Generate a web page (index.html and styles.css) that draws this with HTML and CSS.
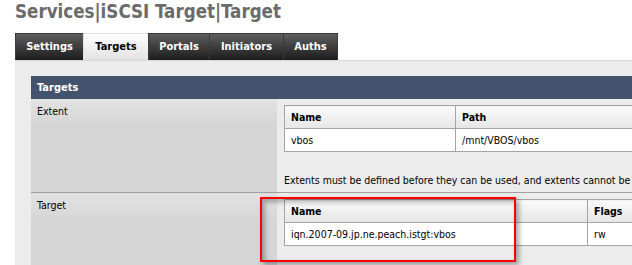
FILE: index.html
```html
<!DOCTYPE html>
<html lang="en">
<head>
  <meta charset="UTF-8">
  <title>Services | iSCSI Target | Target</title>
  <link rel="stylesheet" href="styles.css">
</head>
<body>
  <h1 class="page-title">Services|iSCSI Target|Target</h1>

  <ul class="tabs">
    <li class="tab-settings">Settings</li>
    <li class="tab-targets active">Targets</li>
    <li class="tab-portals">Portals</li>
    <li class="tab-initiators">Initiators</li>
    <li class="tab-auths">Auths</li>
  </ul>

  <div class="tab-panel">
    <table class="form-table">
      <colgroup>
        <col class="label-col">
        <col>
      </colgroup>
      <tr>
        <th colspan="2" class="section-head">Targets</th>
      </tr>
      <tr class="form-row">
        <td class="label-cell">Extent</td>
        <td class="value-cell">
          <table class="list extent-list">
            <tr>
              <th class="col-name">Name</th>
              <th>Path</th>
            </tr>
            <tr>
              <td>vbos</td>
              <td>/mnt/VBOS/vbos</td>
            </tr>
          </table>
          <p class="hint">Extents must be defined before they can be used, and extents cannot be used more than once.</p>
        </td>
      </tr>
      <tr class="form-row last">
        <td class="label-cell">Target</td>
        <td class="value-cell">
          <table class="list target-list">
            <tr>
              <th class="col-name">Name</th>
              <th>Flags</th>
            </tr>
            <tr>
              <td>iqn.2007-09.jp.ne.peach.istgt:vbos</td>
              <td>rw</td>
            </tr>
          </table>
          <div class="highlight"></div>
        </td>
      </tr>
    </table>
  </div>
</body>
</html>
```

FILE: styles.css
```css
body {
  margin: 0;
  padding: 0 0 0 15px;
  font-family: "DejaVu Sans Condensed", "DejaVu Sans", sans-serif;
  font-size: 10.5px;
  color: #000;
  background: #fff;
  width: 700px;
  height: 265px;
  overflow: hidden;
}

.page-title {
  margin: 0;
  padding-top: 1px;
  height: 32px;
  font-size: 18.6px;
  font-weight: bold;
  color: #6b6b6b;
}

.tabs {
  list-style: none;
  margin: 0;
  padding: 0;
  display: flex;
}

.tabs li {
  box-sizing: border-box;
  height: 27px;
  line-height: 25px;
  text-align: center;
  border: 1px solid #3a3a3a;
  border-bottom: none;
  margin-right: -1px;
  background: linear-gradient(to bottom, #5e5e5e, #1c1c1c);
  color: #fff;
  font-weight: bold;
  font-size: 11px;
}

.tabs .tab-settings { width: 69px; }
.tabs .tab-targets { width: 66px; }
.tabs .tab-portals { width: 62px; }
.tabs .tab-initiators { width: 75px; }
.tabs .tab-auths { width: 55px; }

.tabs li.active {
  background: linear-gradient(to bottom, #ffffff, #e2e2e2);
  color: #000;
  border-color: #e0e0e0;
}

.tab-panel {
  background: #ececec;
  border-top: 1px solid #ddd8cc;
  padding: 15px 0 0 16px;
  height: 200px;
}

.form-table {
  border-collapse: collapse;
  table-layout: fixed;
  width: 680px;
}

.label-col {
  width: 246px;
}

.section-head {
  background: #43536e;
  color: #fff;
  text-align: left;
  font-weight: bold;
  font-size: 11px;
  height: 23px;
  padding: 0 6px;
}

.label-cell {
  vertical-align: top;
  padding: 6px 6px;
  background: linear-gradient(to bottom, #e2e2e2, #d5d5d5 28px, #d5d5d5);
}

.value-cell {
  vertical-align: top;
  padding: 6px 0 0 7px;
  position: relative;
}

.form-row > td {
  border-bottom: 1px solid #a0a0a0;
}

.form-row.last > td {
  border-bottom: none;
  height: 70px;
}

.list {
  border-collapse: collapse;
  table-layout: fixed;
  width: 420px;
  background: #fff;
}

.list th,
.list td {
  border: 1px solid #a5a5a5;
  text-align: left;
  padding: 0 6px;
  height: 22px;
  white-space: nowrap;
}

.list th {
  font-weight: bold;
  background: linear-gradient(to bottom, #fafafa, #e6e6e6);
}

.extent-list .col-name {
  width: 158px;
}

.target-list .col-name {
  width: 290px;
}

.hint {
  margin: 22px 0 0;
  height: 18px;
  white-space: nowrap;
}

.highlight {
  position: absolute;
  left: -17px;
  top: 4px;
  width: 252px;
  height: 61px;
  border: 2px solid #f00;
  box-shadow: 3px 3px 5px rgba(0, 0, 0, 0.35), inset 3px 3px 5px rgba(0, 0, 0, 0.3);
}
```
